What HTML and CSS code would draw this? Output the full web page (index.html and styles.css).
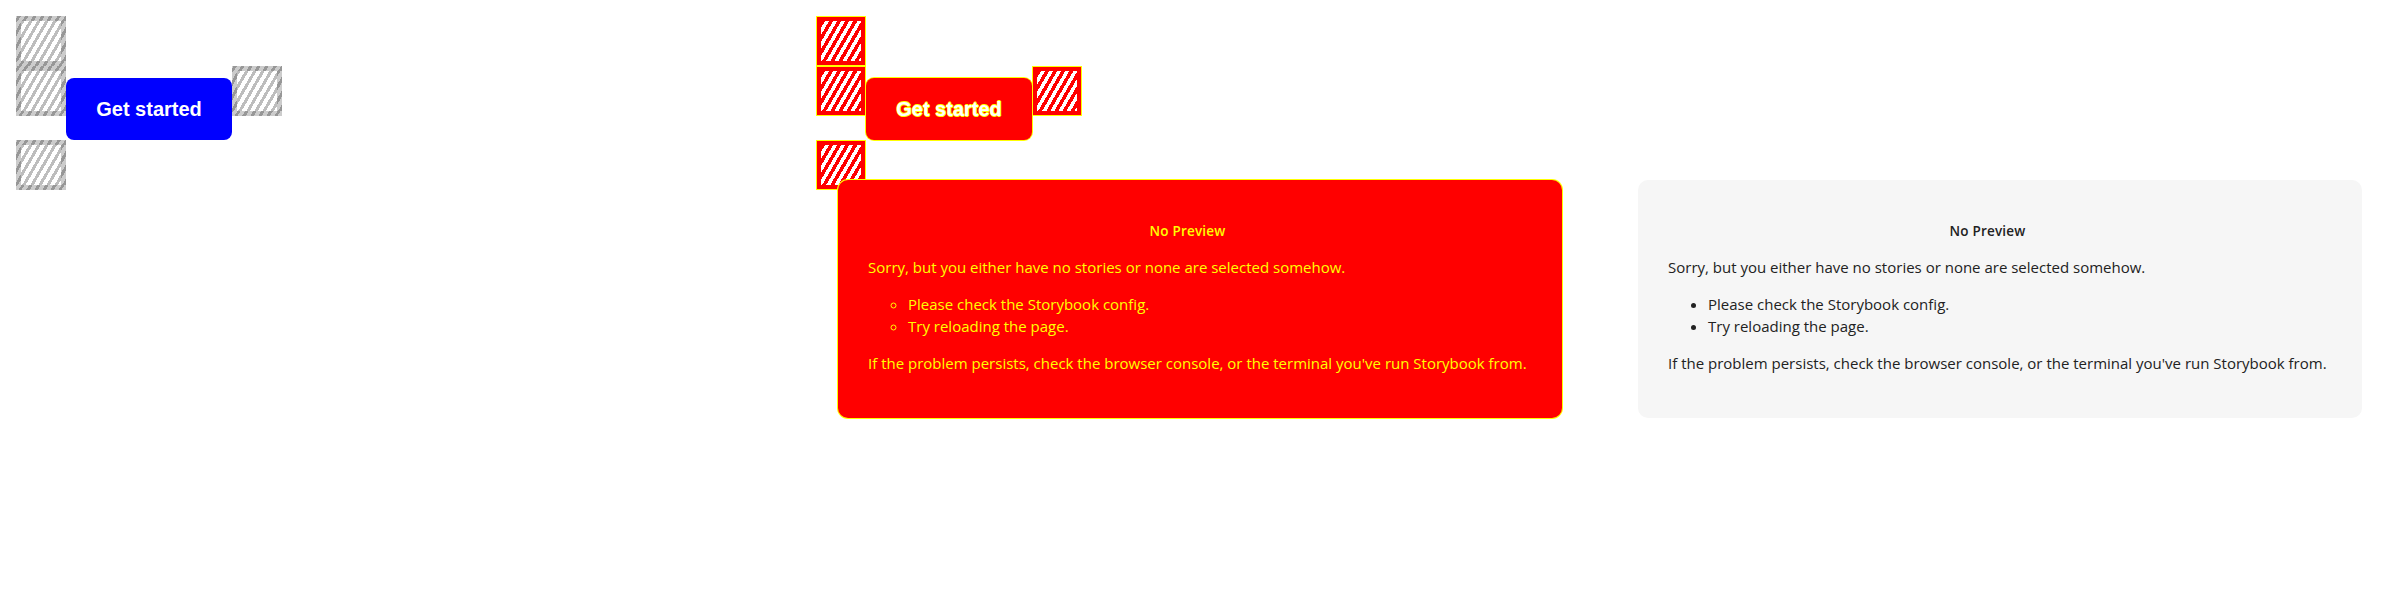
FILE: index.html
```html
<!DOCTYPE html>
<html lang="en">
<head>
<meta charset="utf-8">
<title>Visual diff</title>
<link rel="stylesheet" href="styles.css">
</head>
<body>
<div class="stage">
  <section class="col col-base">
    <div class="anchors">
      <div class="hatch"></div>
      <div class="anchor-row">
        <div class="hatch"></div>
        <div class="btn-slot"><button class="btn">Get started</button></div>
        <div class="hatch"></div>
      </div>
      <div class="hatch"></div>
    </div>
  </section>

  <section class="col col-diff">
    <div class="anchors">
      <div class="hatch"></div>
      <div class="anchor-row">
        <div class="hatch"></div>
        <div class="btn-slot"><button class="btn">Get started</button></div>
        <div class="hatch"></div>
      </div>
      <div class="hatch"></div>
    </div>
    <div class="overlay">
      <div class="panel">
        <h1 class="panel-heading">No Preview</h1>
        <p>Sorry, but you either have no stories or none are selected somehow.</p>
        <ul>
          <li>Please check the Storybook config.</li>
          <li>Try reloading the page.</li>
        </ul>
        <p>If the problem persists, check the browser console, or the terminal you've run Storybook from.</p>
      </div>
    </div>
  </section>

  <section class="col col-new">
    <div class="panel">
      <h1 class="panel-heading">No Preview</h1>
      <p>Sorry, but you either have no stories or none are selected somehow.</p>
      <ul>
        <li>Please check the Storybook config.</li>
        <li>Try reloading the page.</li>
      </ul>
      <p>If the problem persists, check the browser console, or the terminal you've run Storybook from.</p>
    </div>
  </section>
</div>
</body>
</html>
```
FILE: styles.css
```css
html, body {
  margin: 0;
  padding: 0;
  background: #fff;
}

.stage {
  display: grid;
  grid-template-columns: 800px 800px 800px;
  height: 600px;
}

.col {
  position: relative;
  box-sizing: border-box;
  padding: 16px;
  height: 600px;
}

.col-new {
  padding: 180px 38px 0;
}

/* ---------- anchor layout ---------- */
.anchors {
  display: flex;
  flex-direction: column;
  align-items: flex-start;
}

.anchor-row {
  display: flex;
  align-items: flex-start;
}

.btn-slot {
  padding-top: 12px;
}

.hatch {
  width: 50px;
  height: 50px;
  box-sizing: border-box;
  border: 5px solid rgba(0, 0, 0, 0.2);
  background: repeating-linear-gradient(120deg, #bdbdbd 0 3px, #ffffff 3px 7px);
}

.btn {
  display: block;
  width: 166px;
  height: 62px;
  border: 0;
  border-radius: 8px;
  background: #0000ff;
  color: #ffffff;
  font-family: "Liberation Sans", Arial, sans-serif;
  font-weight: 700;
  font-size: 20px;
  padding: 0;
  cursor: pointer;
}

/* ---------- diff column ---------- */
.col-diff .hatch {
  border-color: #ff0000;
  background: repeating-linear-gradient(120deg, #ff0000 0 3.5px, #ffffff 3.5px 7px);
  outline: 1px solid #ffff00;
  outline-offset: -1px;
}

.col-diff .btn {
  background: #ff0000;
  box-shadow: 0 0 0 1px #ffff00;
  text-shadow: 0.7px 0 0 #ffff00, -0.7px 0 0 #ffff00, 0 0.7px 0 #ffff00, 0 -0.7px 0 #ffff00;
}

.overlay {
  position: absolute;
  top: 180px;
  left: 38px;
}

/* ---------- no-preview panel ---------- */
.panel {
  box-sizing: border-box;
  width: 724px;
  padding: 30px;
  border-radius: 10px;
  background: #f6f6f6;
  color: #222222;
  font-family: "Open Sans", "Noto Sans", sans-serif;
  font-size: 15px;
  line-height: 22.4px;
}

.panel-heading {
  margin: 10px 0;
  padding-right: 25px;
  text-align: center;
  font-size: 13.5px;
  font-weight: 600;
  letter-spacing: 0.2px;
  line-height: 22.4px;
}

.panel p {
  margin: 14px 0;
}

.panel ul {
  margin: 14px 0;
  padding-left: 40px;
}

.col-diff .panel {
  background: #ff0000;
  color: #ffff00;
  box-shadow: 0 0 0 1px #ffff00;
}

.col-diff .panel ul {
  list-style: circle;
}
```
